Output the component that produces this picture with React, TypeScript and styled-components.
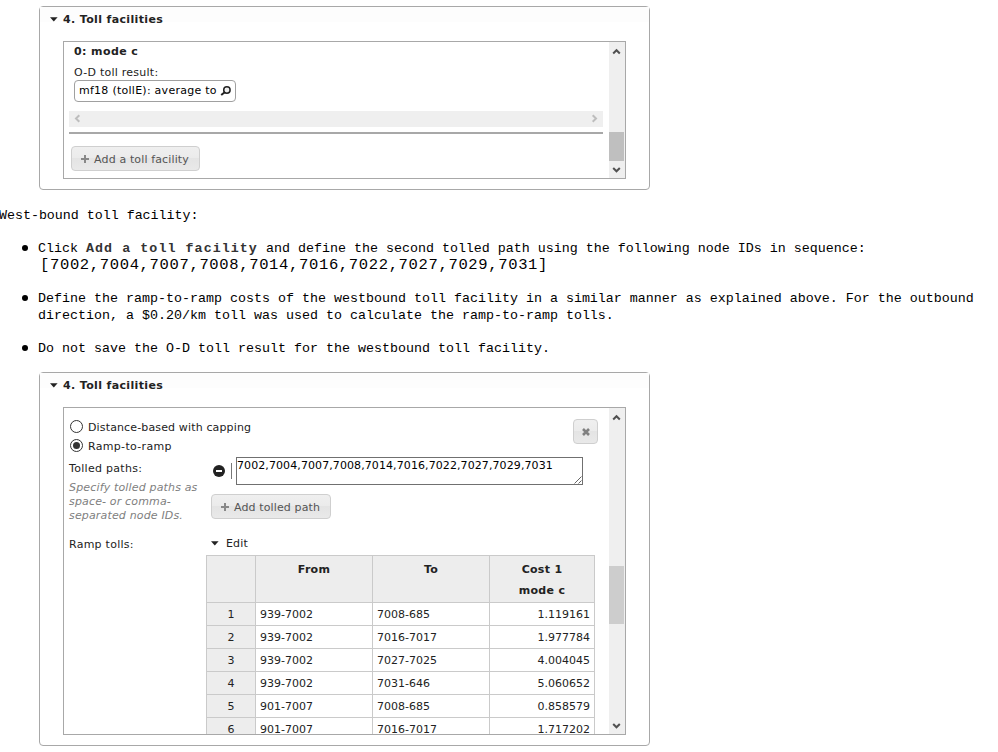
import React from "react";
import styled, { createGlobalStyle, css } from "styled-components";

const GlobalStyle = createGlobalStyle`
  * { box-sizing: border-box; }
  html, body { margin: 0; padding: 0; background: #fff; }
  body { overflow: hidden; }
`;

const Page = styled.main`
  width: 998px;
  height: 752px;
  padding-top: 6px;
  overflow: hidden;
  background: #fff;
  color: #222;
  font: 11px/14px "DejaVu Sans", Verdana, sans-serif;
  letter-spacing: 0.14px;
  white-space: nowrap;
`;

const Panel = styled.section<{ $height: number }>`
  display: flex;
  flex-direction: column;
  width: 611px;
  height: ${(p) => p.$height}px;
  margin-left: 39px;
  padding: 0 23px 10px;
  border: 1px solid #a8a8a8;
  border-radius: 4px;
`;

const PanelHeader = styled.h3`
  display: flex;
  align-items: center;
  gap: 5px;
  height: 34px;
  margin: 0 -23px;
  padding: 0 0 9px 10px;
  background: linear-gradient(#fdfdfd 15px, transparent 15px);
  font-size: 11px;
  letter-spacing: 0.36px;
`;

const ScrollBox = styled.div`
  display: flex;
  width: 563px;
  flex: 1;
  min-height: 0;
  border: 1px solid #a8a8a8;
  overflow: hidden;
`;

const Content = styled.div`
  width: 545px;
  min-height: 0;
  overflow: hidden;
`;

const Track = styled.div`
  display: flex;
  flex-direction: column;
  align-items: center;
  justify-content: space-between;
  width: 16px;
  padding: 5px 1px 4px 0;
  background: #efefef;
`;

const Thumb = styled.div<{ $before: number; $size: number; $color: string }>`
  width: 15px;
  height: ${(p) => p.$size}px;
  margin: ${(p) => p.$before}px 0 auto;
  background: ${(p) => p.$color};
`;

const HTrack = styled.div`
  display: flex;
  align-items: center;
  justify-content: space-between;
  width: 534px;
  height: 16px;
  margin: 9px 0 5px 5px;
  padding: 0 4px 1px;
  background: #efefef;
`;

const Divider = styled.div`
  width: 534px;
  height: 2px;
  margin: 0 0 12px 5px;
  background: #a8a8a8;
`;

const ModeTitle = styled.h4`
  margin: 0 0 0 10px;
  height: 20px;
  font-size: 11px;
  line-height: 19px;
  letter-spacing: 0.4px;
`;

const FieldLabel = styled.div`
  height: 18px;
  margin-left: 10px;
  line-height: 21px;
  letter-spacing: 0.25px;
`;

const MatrixField = styled.div`
  display: flex;
  align-items: center;
  width: 162px;
  height: 22px;
  margin-left: 10px;
  padding: 0 4px;
  border: 1px solid #a0a0a0;
  border-radius: 4px;
  color: #000;
  justify-content: space-between;
  letter-spacing: 0.26px;
`;

const Button = styled.button<{ $width: number }>`
  display: flex;
  align-items: center;
  justify-content: center;
  gap: 4px;
  width: ${(p) => p.$width}px;
  height: 25px;
  padding: 0;
  border: 1px solid #cfcfcf;
  border-radius: 4px;
  background: linear-gradient(#efefef, #ebebeb 48%, #e4e4e4 50%, #e9e9e9);
  color: #555;
  font: inherit;
  line-height: 15px;
  letter-spacing: 0.13px;
`;

const ButtonText = styled.span`
  margin: 1px 1px 0 0;
`;

const AddFacility = styled(Button)`
  margin-left: 7px;
`;

const Prose = styled.article`
  height: 182px;
  padding-top: 17px;
  color: #000;
  font: 13.33px/17px "Liberation Mono", "Courier New", monospace;
  letter-spacing: 0;
`;

const Lead = styled.p`
  margin: 0 0 16px -1px;
  letter-spacing: -0.02px;
`;

const Steps = styled.ul`
  display: grid;
  gap: 16px;
  margin: 0;
  padding: 0;
  list-style: none;
`;

const Step = styled.li`
  display: grid;
  grid-template-columns: 16px 1fr;
  padding-left: 22px;
`;

const Bullet = styled.span`
  width: 6px;
  height: 6px;
  margin-top: 5px;
  border-radius: 50%;
  background: #000;
`;

const Strong = styled.b`
  color: #333;
  letter-spacing: 1.05px;
`;

const NodeList = styled.div`
  margin-left: 2px;
  height: 17px;
  font-size: 15.5px;
  line-height: 17px;
  letter-spacing: 0.66px;
`;

const ModeRow = styled.div`
  display: flex;
  justify-content: space-between;
  height: 47px;
  padding: 9px 11px 0 6px;
`;

const RadioLabel = styled.label<{ $spacing?: number }>`
  display: flex;
  align-items: center;
  gap: 5px;
  height: 19px;
  letter-spacing: ${(p) => p.$spacing ?? 0.14}px;
`;

const RadioText = styled.span`
  margin-top: 2px;
`;

const CloseWrap = styled.div`
  padding-top: 2px;
`;

const FormRow = styled.div`
  display: grid;
  grid-template-columns: 142px 1fr;
  padding-left: 5px;
`;

const LabelCell = styled.div`
  padding-top: 7px;
  letter-spacing: 0.3px;
`;

const Hint = styled.p`
  margin: 5px 0 0;
  color: #808080;
  font-style: italic;
  letter-spacing: 0.16px;
`;

const PathCell = styled.div`
  height: 80px;
  padding-top: 2px;
`;

const PathRow = styled.div`
  display: flex;
  align-items: center;
  padding-left: 2px;
  margin-bottom: 9px;
`;

const Separator = styled.span`
  width: 1px;
  height: 16px;
  margin: 0 4px 0 6px;
  background: #777;
`;

const PathInput = styled.div`
  display: flex;
  justify-content: space-between;
  width: 347px;
  height: 28px;
  padding: 1px 0 0;
  border: 1px solid #707070;
  color: #000;
  letter-spacing: 0.09px;
`;

const Grip = styled.svg`
  align-self: flex-end;
`;

const TollLabel = styled.div`
  padding-top: 3px;
  letter-spacing: 0.25px;
`;

const EditToggle = styled.div`
  display: flex;
  align-items: center;
  gap: 7px;
  height: 20px;
  padding-bottom: 3px;
`;

const TollTable = styled.div`
  width: 389px;
  margin-left: 142px;
  border-top: 1px solid #cacaca;
  border-left: 1px solid #cacaca;
  letter-spacing: 0;
`;

const TollRow = styled.div<{ $head?: boolean }>`
  display: grid;
  grid-template-columns: 49px 117px 117px 105px;
  height: ${(p) => (p.$head ? 47 : 23)}px;
  ${(p) =>
    p.$head &&
    css`
      font-weight: bold;
      background: #ededed;
      letter-spacing: 0.3px;
    `}
`;

const Cell = styled.div<{ $align?: string; $shaded?: boolean; $head?: boolean }>`
  padding: ${(p) => (p.$head ? "3px 4px 0" : "1px 4px 0")};
  border-right: 1px solid #cacaca;
  border-bottom: 1px solid #cacaca;
  background: ${(p) => (p.$shaded ? "#ededed" : "transparent")};
  text-align: ${(p) => p.$align ?? "left"};
  line-height: 21px;
`;

const Triangle = styled.svg`
  margin-bottom: 1px;
`;

const TriangleDown = () => (
  <Triangle width="8" height="5" viewBox="0 0 8 5">
    <path d="M0 .3h7.6L3.8 4.6z" fill="#222" />
  </Triangle>
);

const paths = {
  up: "M1.2 6.5L4.5 3.2L7.8 6.5",
  down: "M1.2 3L4.5 6.3L7.8 3",
  left: "M6.3 1.2L3 4.5L6.3 7.8",
  right: "M2.7 1.2L6 4.5L2.7 7.8",
};

const Chevron = ({ dir, color = "#505050" }: { dir: keyof typeof paths; color?: string }) => (
  <svg width="9" height="9" viewBox="0 0 9 9">
    <path d={paths[dir]} fill="none" stroke={color} strokeWidth="2" />
  </svg>
);

const Plus = () => (
  <svg width="9" height="9" viewBox="0 0 9 9">
    <path d="M0 5h8M4 1v8" stroke="#888" strokeWidth="2" />
  </svg>
);

const Magnifier = () => (
  <svg width="11" height="10" viewBox="0 0 11 10">
    <circle cx="6.9" cy="4" r="3.2" fill="#eee" stroke="#222" strokeWidth="1.5" />
    <path d="M4.8 6.2L1.2 9" fill="none" stroke="#222" strokeWidth="2" />
  </svg>
);

const Cross = () => (
  <svg width="8" height="8" viewBox="0 0 8 8">
    <path d="M1 1l6 6M7 1L1 7" stroke="#808080" strokeWidth="2.6" />
  </svg>
);

const Minus = () => (
  <svg width="12" height="12" viewBox="0 0 12 12">
    <circle cx="6" cy="6" r="6" fill="#222" />
    <path d="M3 6h6" stroke="#fff" strokeWidth="2" />
  </svg>
);

const Radio = ({ checked = false }: { checked?: boolean }) => (
  <svg width="13" height="13" viewBox="0 0 13 13">
    <circle cx="6.5" cy="6.5" r="6" fill="#fff" stroke="#333" />
    {checked && <circle cx="6.5" cy="6.5" r="3.5" fill="#333" />}
  </svg>
);

const Scrollbar = ({ before, size, color }: { before: number; size: number; color: string }) => (
  <Track>
    <Chevron dir="up" />
    <Thumb $before={before} $size={size} $color={color} />
    <Chevron dir="down" />
  </Track>
);

const Header = () => (
  <PanelHeader>
    <TriangleDown />
    4. Toll facilities
  </PanelHeader>
);

const tolls = [
  ["939-7002", "7008-685", "1.119161"],
  ["939-7002", "7016-7017", "1.977784"],
  ["939-7002", "7027-7025", "4.004045"],
  ["939-7002", "7031-646", "5.060652"],
  ["901-7007", "7008-685", "0.858579"],
  ["901-7007", "7016-7017", "1.717202"],
];

export default function App() {
  return (
    <>
      <GlobalStyle />
      <Page>
        <Panel $height={184}>
          <Header />
          <ScrollBox>
            <Content>
              <ModeTitle>0: mode c</ModeTitle>
              <FieldLabel>O-D toll result:</FieldLabel>
              <MatrixField>
                mf18 (tollE): average to
                <Magnifier />
              </MatrixField>
              <HTrack>
                <Chevron dir="left" color="#bdbdbd" />
                <Chevron dir="right" color="#bdbdbd" />
              </HTrack>
              <Divider />
              <AddFacility $width={129}>
                <Plus />
                <ButtonText>Add a toll facility</ButtonText>
              </AddFacility>
            </Content>
            <Scrollbar before={76} size={29} color="#bfbfbf" />
          </ScrollBox>
        </Panel>

        <Prose>
          <Lead>West-bound toll facility:</Lead>
          <Steps>
            <Step>
              <Bullet />
              <div>
                Click <Strong>Add a toll facility</Strong> and define the second tolled path using the
                following node IDs in sequence:
                <NodeList>[7002,7004,7007,7008,7014,7016,7022,7027,7029,7031]</NodeList>
              </div>
            </Step>
            <Step>
              <Bullet />
              <div>
                Define the ramp-to-ramp costs of the westbound toll facility in a similar manner as
                explained above. For the outbound
                <br />
                direction, a $0.20/km toll was used to calculate the ramp-to-ramp tolls.
              </div>
            </Step>
            <Step>
              <Bullet />
              <div>Do not save the O-D toll result for the westbound toll facility.</div>
            </Step>
          </Steps>
        </Prose>

        <Panel $height={374}>
          <Header />
          <ScrollBox>
            <Content>
              <ModeRow>
                <div>
                  <RadioLabel>
                    <Radio />
                    <RadioText>Distance-based with capping</RadioText>
                  </RadioLabel>
                  <RadioLabel $spacing={0.32}>
                    <Radio checked />
                    <RadioText>Ramp-to-ramp</RadioText>
                  </RadioLabel>
                </div>
                <CloseWrap>
                  <Button $width={25} aria-label="Remove">
                    <Cross />
                  </Button>
                </CloseWrap>
              </ModeRow>
              <FormRow>
                <LabelCell>
                  Tolled paths:
                  <Hint>
                    Specify tolled paths as
                    <br />
                    space- or comma-
                    <br />
                    separated node IDs.
                  </Hint>
                </LabelCell>
                <PathCell>
                  <PathRow>
                    <Minus />
                    <Separator />
                    <PathInput>
                      7002,7004,7007,7008,7014,7016,7022,7027,7029,7031
                      <Grip width="8" height="8" viewBox="0 0 8 8">
                        <path d="M0.5 7.5L7.5 0.5M4.5 7.5L7.5 4.5" stroke="#555" strokeWidth="0.9" />
                      </Grip>
                    </PathInput>
                  </PathRow>
                  <Button $width={120}>
                    <Plus />
                    <ButtonText>Add tolled path</ButtonText>
                  </Button>
                </PathCell>
              </FormRow>
              <FormRow>
                <TollLabel>Ramp tolls:</TollLabel>
                <EditToggle>
                  <TriangleDown />
                  Edit
                </EditToggle>
              </FormRow>
              <TollTable>
                <TollRow $head>
                  <Cell $head />
                  <Cell $head $align="center">From</Cell>
                  <Cell $head $align="center">To</Cell>
                  <Cell $head $align="center">
                    Cost 1<br />
                    mode c
                  </Cell>
                </TollRow>
                {tolls.map(([from, to, cost], i) => (
                  <TollRow key={i}>
                    <Cell $shaded $align="center">{i + 1}</Cell>
                    <Cell>{from}</Cell>
                    <Cell>{to}</Cell>
                    <Cell $align="right">{cost}</Cell>
                  </TollRow>
                ))}
              </TollTable>
            </Content>
            <Scrollbar before={144} size={58} color="#cdcdcd" />
          </ScrollBox>
        </Panel>
      </Page>
    </>
  );
}
